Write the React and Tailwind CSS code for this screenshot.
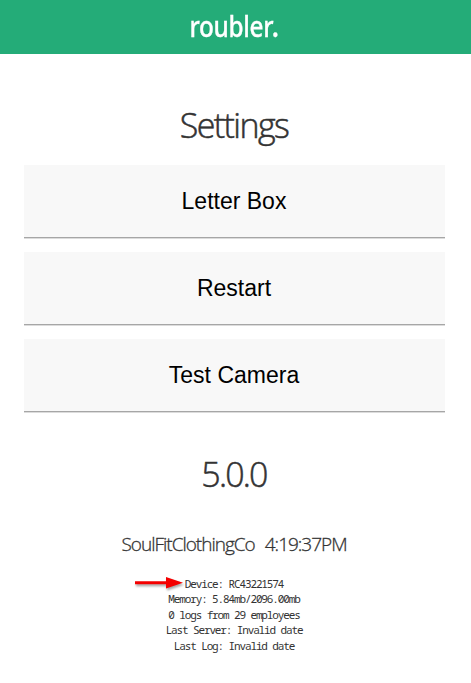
import React from "react";

const ACTIONS = ["Letter Box", "Restart", "Test Camera"];

const STATUS = [
  "Device: RC43221574",
  "Memory: 5.84mb/2096.00mb",
  "0 logs from 29 employees",
  "Last Server: Invalid date",
  "Last Log: Invalid date",
];

function Arrow() {
  return (
    <svg
      className="absolute top-[-2px] left-[-32px] drop-shadow-[1px_2px_1px_rgba(0,0,0,0.35)]"
      width="50"
      height="18"
      viewBox="0 0 50 18"
    >
      <path d="M1 7.2h31V3L49 8.7 32 14.5V10.2H1z" fill="#f40000" />
    </svg>
  );
}

export default function App() {
  return (
    <div className="h-[683px] w-[471px] overflow-hidden bg-white font-['Open_Sans',sans-serif] text-[#333]">
      <header className="flex h-[54px] items-center justify-center bg-[#24ac78] pr-[3px] pb-[3px]">
        <span className="origin-center scale-x-[0.87] font-['Noto_Sans',sans-serif] text-[28px] font-medium tracking-[-0.4px] text-white [-webkit-text-stroke:0.3px_white]">
          roubler<span className="-ml-px font-['Lato',sans-serif] text-[30px] font-bold">.</span>
        </span>
      </header>

      <main className="flex flex-col items-center pr-[3px]">
        <h1 className="mt-[47px] text-[34px] leading-[48px] font-light tracking-[-1.6px] [-webkit-text-stroke:0.5px_#333]">Settings</h1>

        <div className="mt-[16px] flex w-[421px] flex-col gap-[14px]">
          {ACTIONS.map((label) => (
            <button
              key={label}
              className="h-[73px] border-b border-[#a6a6a6] bg-[#f8f8f8] font-['Liberation_Sans',Arial,sans-serif] text-[23px] text-black shadow-[0_1px_0_#dcdcdc]"
            >
              {label}
            </button>
          ))}
        </div>

        <p className="mt-[38px] text-[34px] leading-[48px] font-light tracking-[-1.8px] [-webkit-text-stroke:0.5px_#333]">5.0.0</p>

        <p className="mt-[31px] flex gap-[10px] text-[19px] leading-[30px] font-light tracking-[-1px] [-webkit-text-stroke:0.3px_#333]">
          <span>SoulFitClothingCo</span>
          <span>4:19:37PM</span>
        </p>

        <div className="relative mt-[16.5px] text-center font-['Noto_Sans_Mono','DejaVu_Sans_Mono',monospace] text-[11px] leading-[15.5px] tracking-[-1.13px]">
          <Arrow />
          {STATUS.map((line) => (
            <p key={line}>{line}</p>
          ))}
        </div>
      </main>
    </div>
  );
}
